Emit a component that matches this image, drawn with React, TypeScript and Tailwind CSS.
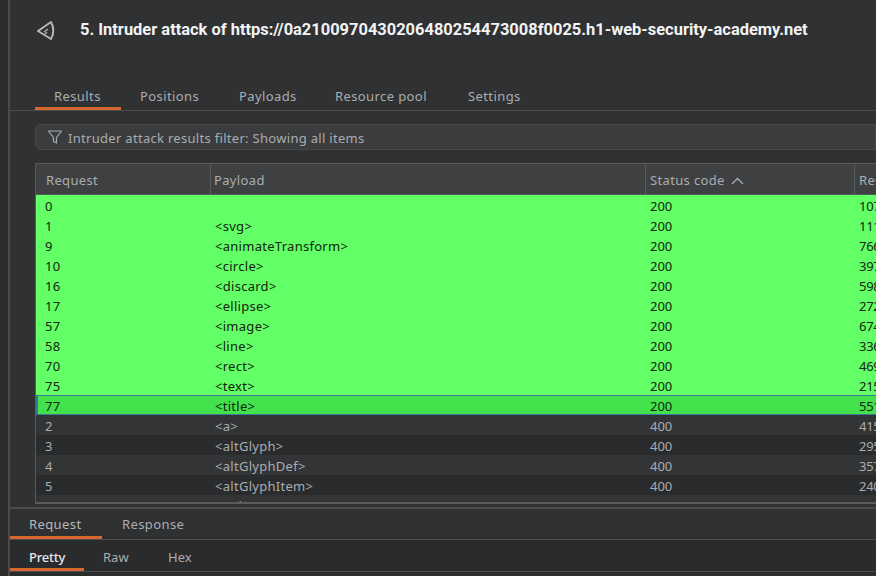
import React from 'react'

const mainTabs = [
  { label: 'Results', width: 'w-[86px] border-[#d8662f]' },
  { label: 'Positions', width: 'w-[99px] border-transparent' },
  { label: 'Payloads', width: 'w-[96px] border-transparent' },
  { label: 'Resource pool', width: 'w-[133px] border-transparent' },
  { label: 'Settings', width: 'w-[90px] border-transparent' },
]

const rows = [
  ['0', '', '200', '107'],
  ['1', '<svg>', '200', '111'],
  ['9', '<animateTransform>', '200', '766'],
  ['10', '<circle>', '200', '397'],
  ['16', '<discard>', '200', '598'],
  ['17', '<ellipse>', '200', '272'],
  ['57', '<image>', '200', '674'],
  ['58', '<line>', '200', '336'],
  ['70', '<rect>', '200', '469'],
  ['75', '<text>', '200', '215'],
  ['77', '<title>', '200', '551'],
  ['2', '<a>', '400', '415'],
  ['3', '<altGlyph>', '400', '295'],
  ['4', '<altGlyphDef>', '400', '357'],
  ['5', '<altGlyphItem>', '400', '240'],
  ['6', '<animate>', '400', '23'],
]

const Cells = ({ row }: { row: string[] }) => (
  <>
    <div className="w-[168px] shrink-0 pl-[7px]">{row[0]}</div>
    <div className="w-[437px] shrink-0 pl-[9px]">{row[1]}</div>
    <div className="w-[216px] shrink-0 pl-[7px] tracking-[0px]">{row[2]}</div>
    <div className="shrink-0 tracking-[-0.3px]">{row[3]}</div>
  </>
)

const Row = ({ row, idx }: { row: string[]; idx: number }) => {
  if (row[2] === '200') {
    if (row[0] === '77') {
      return (
        <div className="flex h-5 shrink-0 items-center border-y border-l-2 border-[#38769a] bg-[#43e24d] pt-[3px] tracking-[0.28px] text-[#10240f]">
          <Cells row={row} />
        </div>
      )
    }
    return (
      <div className="flex h-5 shrink-0 items-center bg-[#62ff66] pt-[3px] pl-[2px] tracking-[0.28px] text-[#14240f]">
        <Cells row={row} />
      </div>
    )
  }
  return (
    <div
      className={
        idx % 2 === 1
          ? 'flex h-5 shrink-0 items-center bg-[#333436] pt-[3px] pl-[2px] tracking-[0.28px] text-[#a9adb0]'
          : 'flex h-5 shrink-0 items-center bg-[#2a2b2c] pt-[3px] pl-[2px] tracking-[0.28px] text-[#a9adb0]'
      }
    >
      <Cells row={row} />
    </div>
  )
}

export default function App() {
  return (
    <div className="flex h-[576px] w-[876px] overflow-hidden bg-[#2b2c2e] font-['Noto_Sans','Open_Sans',sans-serif] text-[13px]">
      <div className="w-[10px] shrink-0 border-r-2 border-[#4a4b4d] bg-[#2b2c2e]" />
      <div className="flex min-w-0 flex-1 flex-col">
        <div className="h-[507px] shrink-0 bg-[#303133]">
          <div className="flex h-[60px] items-center pl-[26px]">
            <svg width="20" height="22" viewBox="0 0 20 22" fill="none" stroke="#b4b6b8" strokeWidth="2" strokeLinejoin="round">
              <path d="M2 12 L15 3 C18 8 18 15 15 20 Z" />
              <path d="M8 13 L12 10 M11 13 L9 15" strokeWidth="1.2" />
            </svg>
            <div className="ml-[24px] font-['Roboto',sans-serif] text-[16.45px] font-bold whitespace-nowrap text-[#f2f3f4]">
              5. Intruder attack of https://0a2100970430206480254473008f0025.h1-web-security-academy.net
            </div>
          </div>
          <div className="flex h-[51px] items-end border-b border-[#4a4b4d] pl-[25px]">
            {mainTabs.map((tab) => (
              <div
                key={tab.label}
                className={`flex h-[23px] items-center border-b-[3px] pl-[19px] tracking-[0.4px] whitespace-nowrap text-[#a9adb0] ${tab.width}`}
              >
                {tab.label}
              </div>
            ))}
          </div>
          <div className="ml-[25px] mt-[13px] flex h-[26px] items-center rounded-l-[6px] border border-[#48494b] bg-[#3b3c3e] pl-[11px] text-[#a9adb0]">
            <svg width="16" height="16" viewBox="0 0 16 16" fill="none" stroke="#a9adb0" strokeWidth="1.2" strokeLinejoin="round">
              <path d="M1.5 2 H14.5 L9.5 8.5 V14 L6.5 12.5 V8.5 Z" />
            </svg>
            <span className="ml-[5px] pt-[3px] tracking-[0.3px]">Intruder attack results filter: Showing all items</span>
          </div>
          <div className="ml-[25px] mt-[13px] flex h-[341px] flex-col overflow-hidden border-t border-l border-b-2 border-[#5a5b5d]">
            <div className="flex h-[31px] shrink-0 items-center border-b border-[#5a5b5d] bg-[#3f4042] pt-[1px] tracking-[0.35px] whitespace-nowrap text-[#a9adb0]">
              <div className="flex h-full w-[175px] shrink-0 items-center border-r border-[#5a5b5d] pt-[3px] pl-[10px]">Request</div>
              <div className="flex h-full w-[435px] shrink-0 items-center border-r border-[#5a5b5d] pt-[3px] pl-[3px]">Payload</div>
              <div className="flex h-full w-[209px] shrink-0 items-center gap-[6px] border-r border-[#5a5b5d] pt-[3px] pl-[4px]">
                Status code
                <svg width="13" height="8" viewBox="0 0 13 8" fill="none" stroke="#a9adb0" strokeWidth="1.3">
                  <path d="M1 7 L6.5 1.5 L12 7" />
                </svg>
              </div>
              <div className="pt-[3px] pl-[4px]">Response received</div>
            </div>
            {rows.map((row, idx) => (
              <Row key={row[0]} row={row} idx={idx} />
            ))}
          </div>
        </div>
        <div className="flex h-[32px] shrink-0 items-end border-t-2 border-[#4a4b4d] bg-[#2f3032] tracking-[0.4px] whitespace-nowrap">
          <div className="flex h-[28px] w-[92px] items-center border-b-[3px] border-[#d8662f] pt-[2px] pl-[19px] text-[#b4b6b8]">Request</div>
          <div className="flex h-[28px] w-[85px] items-center border-b-[3px] border-transparent pt-[2px] pl-[20px] text-[#a9adb0]">Response</div>
        </div>
        <div className="flex h-[33px] shrink-0 items-end border-y border-[#4a4b4d] bg-[#2a2b2c] whitespace-nowrap">
          <div className="flex h-[24px] w-[74px] items-center border-b-[3px] border-[#d8662f] pl-[19px] font-medium tracking-[-0.2px] text-[#e6e7e8]">Pretty</div>
          <div className="flex h-[24px] w-[65px] items-center border-b-[3px] border-transparent pl-[19px] text-[#a9adb0]">Raw</div>
          <div className="flex h-[24px] w-[62px] items-center border-b-[3px] border-transparent pl-[19px] text-[#a9adb0]">Hex</div>
        </div>
      </div>
    </div>
  )
}
